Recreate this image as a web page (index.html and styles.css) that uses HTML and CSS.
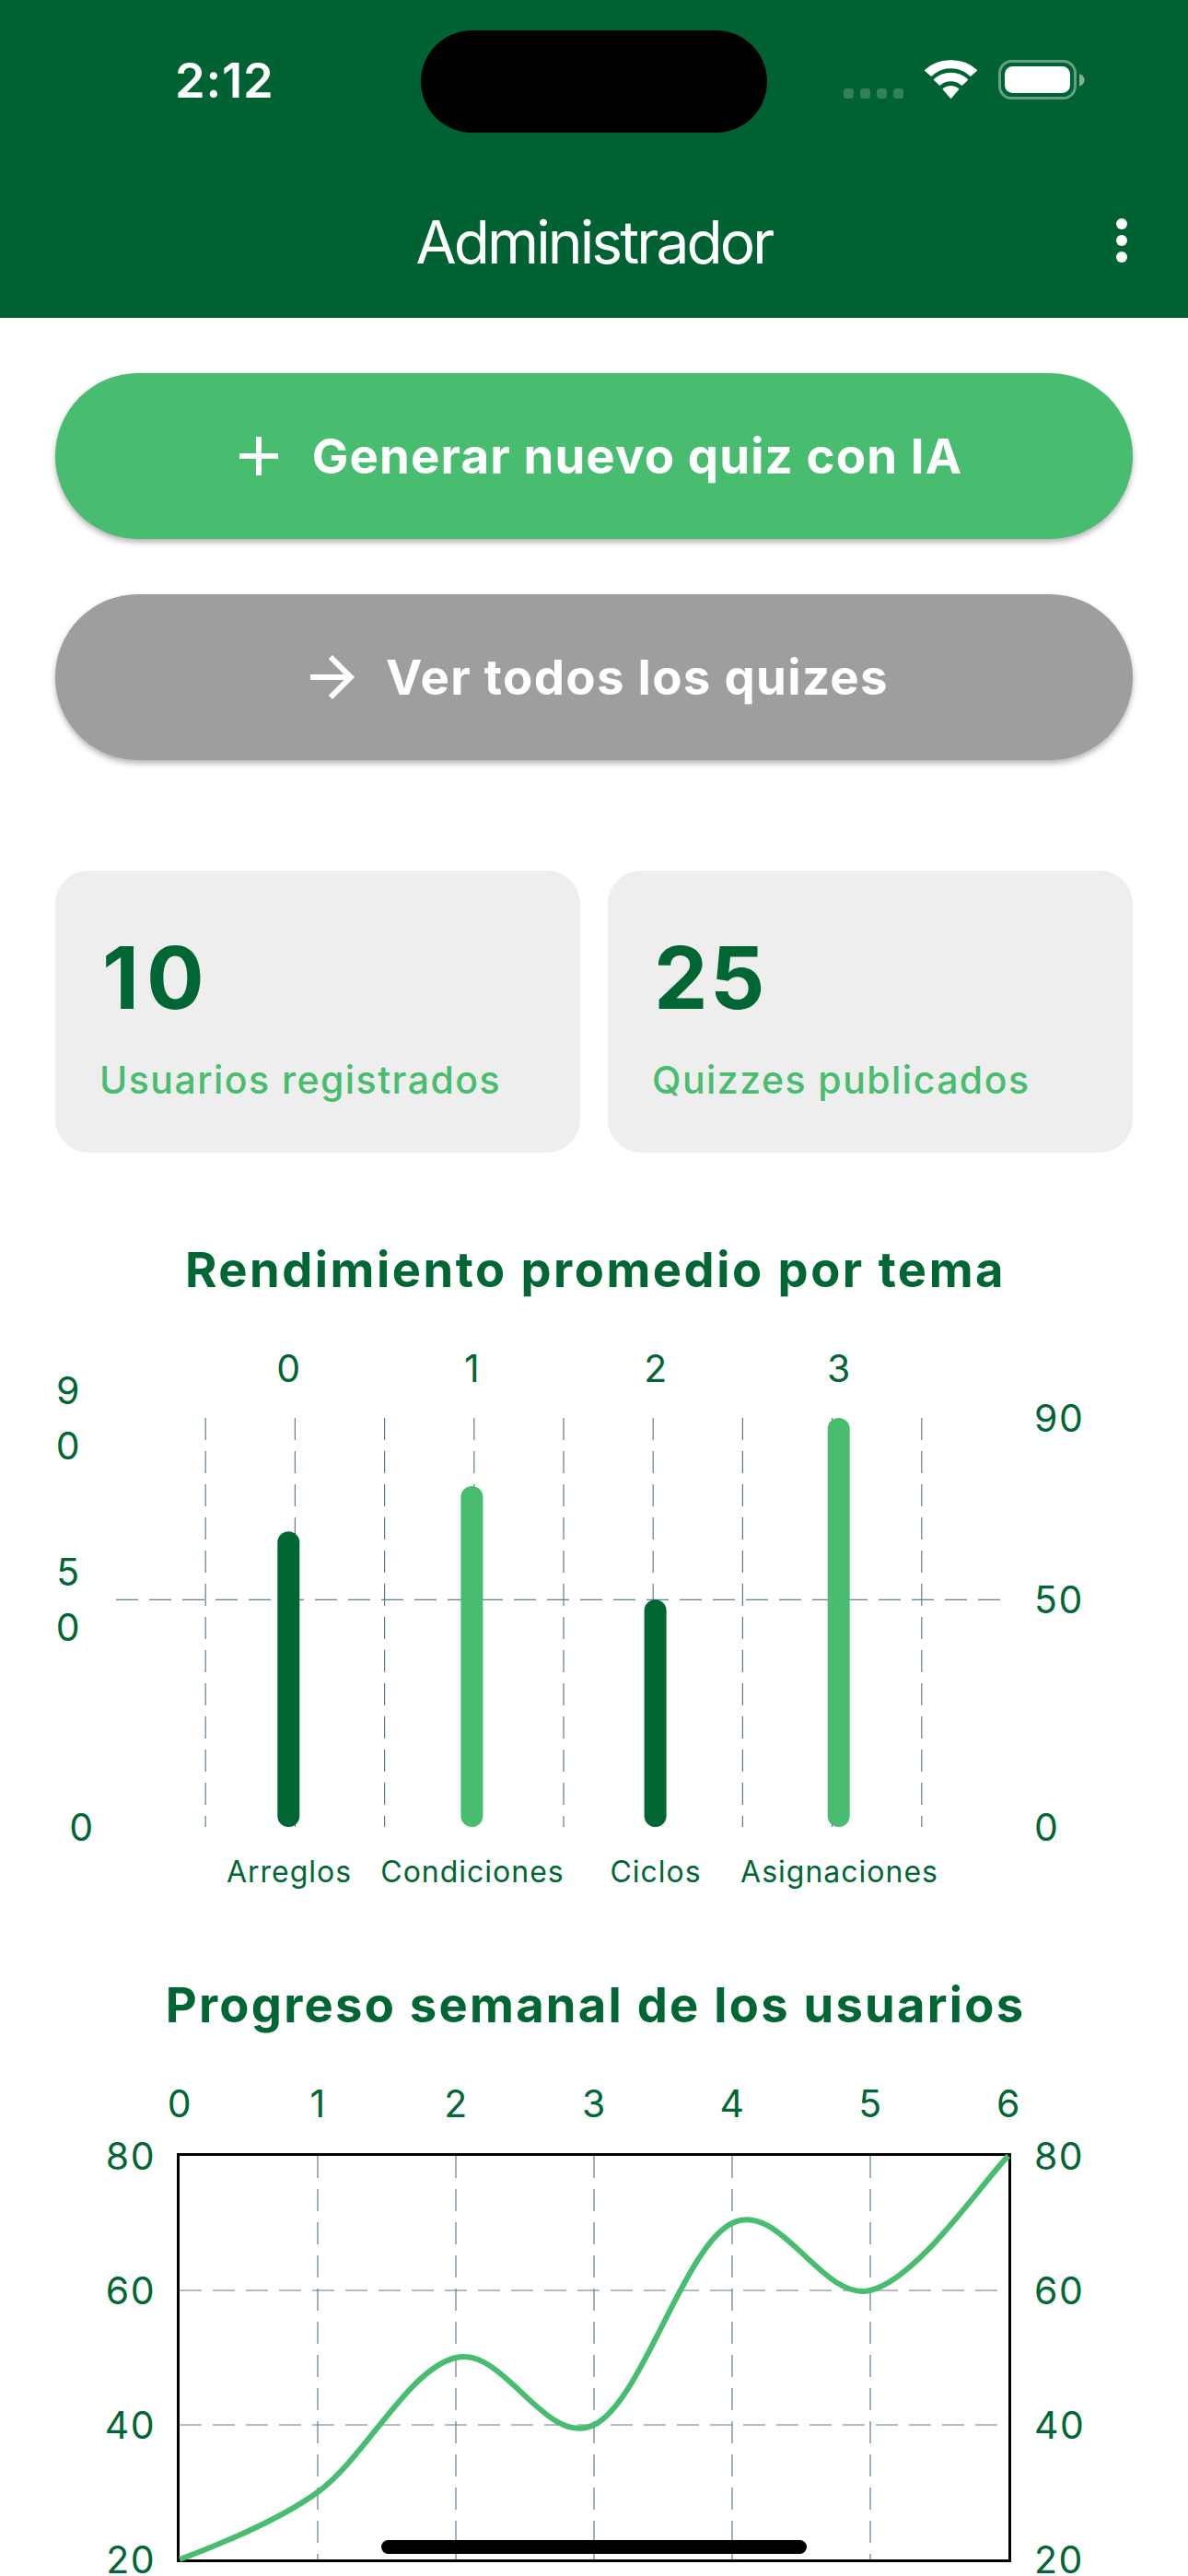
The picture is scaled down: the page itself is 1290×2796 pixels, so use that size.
FILE: index.html
```html
<!DOCTYPE html>
<html lang="es">
<head>
<meta charset="utf-8">
<title>Administrador</title>
<link rel="stylesheet" href="styles.css">
</head>
<body>
<div class="screen">
  <header class="header">
    <div class="status">
      <span class="time">2:12</span>
      <span class="island"></span>
      <svg class="status-icons" viewBox="0 0 264 44" width="264" height="44">
        <g fill="#fff" fill-opacity=".2">
          <rect x="0" y="31" width="11" height="11" rx="3.5"/>
          <rect x="18" y="31" width="11" height="11" rx="3.5"/>
          <rect x="36" y="31" width="11" height="11" rx="3.5"/>
          <rect x="54" y="31" width="11" height="11" rx="3.5"/>
        </g>
        <g fill="#fff">
          <path d="M116.500 9c7.900 0 15.100 3.100 20.500 8.200.4.400 1 .4 1.400 0l6.300-5.400c.4-.4.400-1 0-1.400A41 41 0 0 0 116.500 0a41 41 0 0 0-28.200 10.400c-.4.400-.4 1 0 1.400l6.300 5.400c.4.400 1 .4 1.400 0A30 30 0 0 1 116.500 9z" transform="translate(0 .3)"/>
          <path d="M116.500 23.200c4.300 0 8.200 1.600 11.300 4.200.4.400 1 .4 1.400 0l5.500-5.200c.4-.4.400-1 0-1.400a27 27 0 0 0-36.400 0c-.4.400-.4 1 0 1.400l5.500 5.200c.4.400 1 .4 1.400 0a17 17 0 0 1 11.300-4.200z"/>
          <path d="M125.100 32.300c.4-.4.400-1 0-1.300a13.500 13.500 0 0 0-17.200 0c-.4.300-.4.900 0 1.300l7.900 9.200c.4.500 1 .5 1.400 0z"/>
        </g>
        <rect x="169.500" y="1.500" width="82" height="40" rx="13" fill="none" stroke="#fff" stroke-opacity=".4" stroke-width="3"/>
        <rect x="175" y="7" width="71" height="29" rx="8.500" fill="#fff"/>
        <path d="M256 15.300c3.500 1 5.600 3.600 5.600 6.600s-2.100 5.600-5.600 6.600z" fill="#fff" fill-opacity=".5"/>
      </svg>
    </div>
    <div class="appbar">
      <h1 class="title">Administrador</h1>
      <svg class="menu" viewBox="0 0 12 48" width="12" height="48" fill="#fff">
        <circle cx="6" cy="6" r="6"/><circle cx="6" cy="24" r="6"/><circle cx="6" cy="42" r="6"/>
      </svg>
    </div>
  </header>

  <main class="content">
    <div class="actions">
      <button class="btn btn-primary">
        <svg viewBox="0 0 24 24" width="72" height="72" fill="#fff"><path d="M19 13h-6v6h-2v-6H5v-2h6V5h2v6h6z"/></svg>
        <span class="label-generate">Generar nuevo quiz con IA</span>
      </button>
      <button class="btn btn-secondary">
        <svg viewBox="0 0 24 24" width="72" height="72" fill="#fff"><path d="M12 4l-1.410 1.410L16.170 11H4v2h12.170l-5.580 5.590L12 20l8-8z"/></svg>
        <span class="label-view">Ver todos los quizes</span>
      </button>
    </div>

    <div class="stats">
      <div class="card"><span class="number number-users">10</span><span class="caption">Usuarios registrados</span></div>
      <div class="card"><span class="number">25</span><span class="caption">Quizzes publicados</span></div>
    </div>

    <section class="chart">
      <h2 class="heading heading-topics">Rendimiento promedio por tema</h2>
      <svg class="plot" viewBox="0 0 1170 612" width="1170" height="612">
        <g class="grid">
          <path d="M66 281.300H1038"/>
          <path d="M163.200 84V528M260.400 84V528M357.600 84V528M454.800 84V528M552 84V528M649.200 84V528M746.400 84V528M843.600 84V528M940.800 84V528"/>
        </g>
        <rect class="bar-dark" x="241.300" y="207.300" width="24" height="320.700" rx="12"/>
        <rect class="bar-light" x="440.400" y="158" width="24" height="370" rx="12"/>
        <rect class="bar-dark" x="639.600" y="281.300" width="24" height="246.700" rx="12"/>
        <rect class="bar-light" x="838.700" y="84" width="24" height="444" rx="12"/>
        <g class="axis middle">
          <text x="254" y="45">0</text><text x="453" y="45">1</text><text x="652.500" y="45">2</text><text x="851.500" y="45">3</text>
          <text x="14.500" y="69">9</text><text x="14.500" y="129">0</text>
          <text x="14.500" y="266">5</text><text x="14.500" y="326">0</text>
          <text x="29" y="543">0</text>
        </g>
        <g class="axis">
          <text x="1063" y="99">90</text><text x="1063" y="296">50</text><text x="1063" y="543">0</text>
        </g>
        <g class="topic middle">
          <text x="254" y="588">Arreglos</text><text x="453" y="588">Condiciones</text><text x="652" y="588">Ciclos</text><text x="851.500" y="588">Asignaciones</text>
        </g>
      </svg>
    </section>

    <section class="chart">
      <h2 class="heading heading-weekly">Progreso semanal de los usuarios</h2>
      <svg class="plot" viewBox="0 0 1170 542" width="1170" height="542">
        <g class="grid">
          <path d="M135 230H1035M135 376H1035"/>
          <path d="M285 84V522M435 84V522M585 84V522M735 84V522M885 84V522"/>
        </g>
        <rect class="frame" x="133.500" y="82.500" width="903" height="441"/>
        <path class="line" transform="translate(135 84)" d="M0 438C0 438 97.500 403.300 150 365C202.500 326.700 247.500 231.800 300 219C352.500 206.200 397.500 317.600 450 292C502.500 266.500 547.500 98.600 600 73C652.500 47.500 697.500 158.800 750 146C802.500 133.200 873.800 25.600 900 0"/>
        <g class="axis middle">
          <text x="135.500" y="42">0</text><text x="285.500" y="42">1</text><text x="435.500" y="42">2</text><text x="585.500" y="42">3</text><text x="735.500" y="42">4</text><text x="885.500" y="42">5</text><text x="1035.500" y="42">6</text>
        </g>
        <g class="axis end">
          <text x="109" y="99">80</text><text x="109" y="245">60</text><text x="109" y="391">40</text><text x="109" y="537">20</text>
        </g>
        <g class="axis">
          <text x="1063" y="99">80</text><text x="1063" y="245">60</text><text x="1063" y="391">40</text><text x="1063" y="537">20</text>
        </g>
      </svg>
    </section>
  </main>
  <div class="home-indicator"></div>
</div>
</body>
</html>
```
FILE: styles.css
```css
* { box-sizing: border-box; }
body { margin: 0; background: #fff; font-family: Inter, "Liberation Sans", sans-serif; color: #006633; }
.screen { position: relative; width: 1290px; height: 2796px; overflow: hidden; }

.header { height: 345px; background: #006233; color: #fff; }
.status { height: 177px; padding-top: 33px; display: grid; grid-template-columns: 457px 376px 457px; align-items: start; }
.time { padding: 24px 0 0 190px; font-size: 52.500px; line-height: 61px; font-weight: 600; letter-spacing: 0.800px; }
.island { height: 111px; border-radius: 56px; background: #000; }
.status-icons { margin: 32px 0 0 83px; }
.appbar { height: 168px; display: grid; grid-template-columns: 1fr auto 1fr; align-items: center; }
.title { grid-column: 2; margin: 0; padding-top: 3px; font-size: 64px; line-height: 84px; font-weight: 400; letter-spacing: -2.900px; }
.menu { justify-self: end; margin-right: 66px; }

.content { padding: 60px 60px 0; }
.actions { display: flex; flex-direction: column; gap: 60px; }
.btn { height: 180px; border: 0; padding: 0; border-radius: 90px; display: flex; align-items: center; justify-content: center; gap: 22px; color: #fff; font-family: inherit; font-size: 52.800px; font-weight: 650; line-height: 72px; box-shadow: 0 4px 6px rgba(0, 0, 0, .26), 0 1px 5px rgba(0, 0, 0, .06); }
.btn-primary { background: #48bd70; }
.btn-secondary { background: #9e9e9e; }
.label-generate { letter-spacing: 1.100px; }
.label-view { letter-spacing: 1.300px; }

.stats { margin-top: 120px; display: grid; grid-template-columns: 1fr 1fr; gap: 30px; }
.card { height: 306px; padding: 53px 48px; border-radius: 36px; background: #eee; display: flex; flex-direction: column; }
.number { padding-left: 2px; font-size: 93px; line-height: 126px; font-weight: 700; letter-spacing: 2.500px; }
.number-users { padding-left: 3px; letter-spacing: 8px; }
.caption { margin-top: 18px; font-size: 41px; line-height: 60px; font-weight: 450; color: #48bd70; letter-spacing: 1.450px; }

.chart { display: flex; flex-direction: column; }
.heading { margin: 0; padding-left: 3px; text-align: center; font-size: 52.500px; line-height: 78px; font-weight: 670; letter-spacing: 2.500px; }
.heading-topics { margin-top: 88px; }
.heading-weekly { margin-top: 70px; letter-spacing: 2.250px; }
.plot { display: block; overflow: visible; }
.heading-topics + .plot { margin-top: 38px; }
.heading-weekly + .plot { margin-top: 41px; }

.grid { fill: none; stroke: #607d8b; stroke-width: 1.200; stroke-dasharray: 24 12; }
.bar-dark { fill: #006633; }
.bar-light { fill: #48bd70; }
.frame { fill: none; stroke: #000; stroke-width: 3; }
.line { fill: none; stroke: #48bd70; stroke-width: 6; }
.axis { font-size: 41px; letter-spacing: 1.500px; fill: #006633; }
.topic { font-size: 32px; letter-spacing: 1px; fill: #006633; }
.middle { text-anchor: middle; }
.end { text-anchor: end; }

.home-indicator { position: absolute; left: 414px; top: 2757px; width: 462px; height: 15px; border-radius: 8px; background: #000; }
```
